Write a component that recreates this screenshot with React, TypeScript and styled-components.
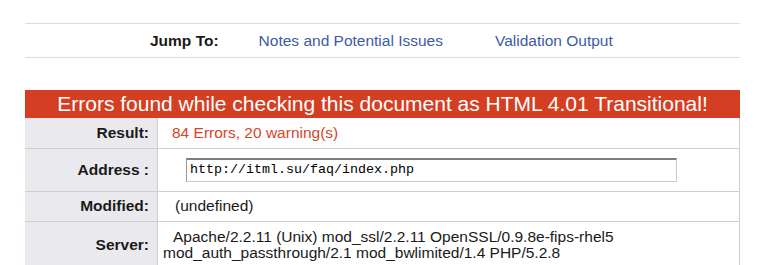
import styled, { createGlobalStyle } from "styled-components";

const GlobalStyle = createGlobalStyle`
  body {
    margin: 0;
    background: #fff;
    font-family: "Liberation Sans", Arial, sans-serif;
    color: #000;
  }
`;

const Page = styled.div`
  width: 715px;
  padding: 23px 0 0 25px;
`;

const JumpBar = styled.nav`
  display: flex;
  align-items: center;
  height: 33px;
  border-top: 1px solid #dcdcdc;
  border-bottom: 1px solid #dcdcdc;
  padding-left: 125px;
  font-size: 15.5px;
`;

const JumpLabel = styled.span`
  font-weight: bold;
  color: #1a1a1a;
  margin-right: 40px;
`;

const JumpLink = styled.a`
  color: #3d5aa6;
  text-decoration: none;
  margin-right: 52px;
`;

const Banner = styled.h2`
  margin: 32px 0 0;
  height: 28px;
  line-height: 28px;
  background: #d43f23;
  color: #fff;
  font-size: 21px;
  font-weight: normal;
  text-align: center;
`;

const Table = styled.table`
  width: 100%;
  border-collapse: collapse;
  font-size: 15.5px;
`;

const Row = styled.tr<{ $h: number }>`
  height: ${(p) => p.$h}px;
  border-bottom: 1px solid #cfcfcf;
`;

const Label = styled.th`
  width: 124px;
  background: #eaeaee;
  border-right: 1px solid #cfcfcf;
  text-align: right;
  padding: 0 8px 0 0;
  font-weight: bold;
  color: #1a1a1a;
`;

const Value = styled.td<{ $pad: number; $red?: boolean }>`
  border-right: 1px solid #cfcfcf;
  padding: 0 0 0 ${(p) => p.$pad}px;
  color: ${(p) => (p.$red ? "#d6452a" : "#1a1a1a")};
  line-height: 16px;
`;

const UriInput = styled.input`
  width: 491px;
  height: 24px;
  box-sizing: border-box;
  border: 1px solid #cbcbcb;
  border-top: 2px solid #7e7e7e;
  border-left-color: #9a9a9a;
  padding: 0 0 1px 3px;
  font-family: "Liberation Mono", "Courier New", monospace;
  font-size: 13.33px;
  color: #000;
  display: block;
  outline: none;
`;

const Indent = styled.span`
  padding-left: 10px;
`;

export default function App() {
  return (
    <Page>
      <GlobalStyle />
      <JumpBar>
        <JumpLabel>Jump To:</JumpLabel>
        <JumpLink href="#preparse_warnings">Notes and Potential Issues</JumpLink>
        <JumpLink href="#result">Validation Output</JumpLink>
      </JumpBar>
      <Banner>Errors found while checking this document as HTML 4.01 Transitional!</Banner>
      <Table>
        <tbody>
          <Row $h={30}>
            <Label>Result:</Label>
            <Value $pad={14} $red>84 Errors, 20 warning(s)</Value>
          </Row>
          <Row $h={43}>
            <Label>Address :</Label>
            <Value $pad={28}>
              <UriInput readOnly value="http://itml.su/faq/index.php" />
            </Value>
          </Row>
          <Row $h={30}>
            <Label>Modified:</Label>
            <Value $pad={17}>(undefined)</Value>
          </Row>
          <Row $h={48}>
            <Label>Server:</Label>
            <Value $pad={5}>
              <Indent>Apache/2.2.11 (Unix) mod_ssl/2.2.11 OpenSSL/0.9.8e-fips-rhel5</Indent>
              <br />
              mod_auth_passthrough/2.1 mod_bwlimited/1.4 PHP/5.2.8
            </Value>
          </Row>
        </tbody>
      </Table>
    </Page>
  );
}
